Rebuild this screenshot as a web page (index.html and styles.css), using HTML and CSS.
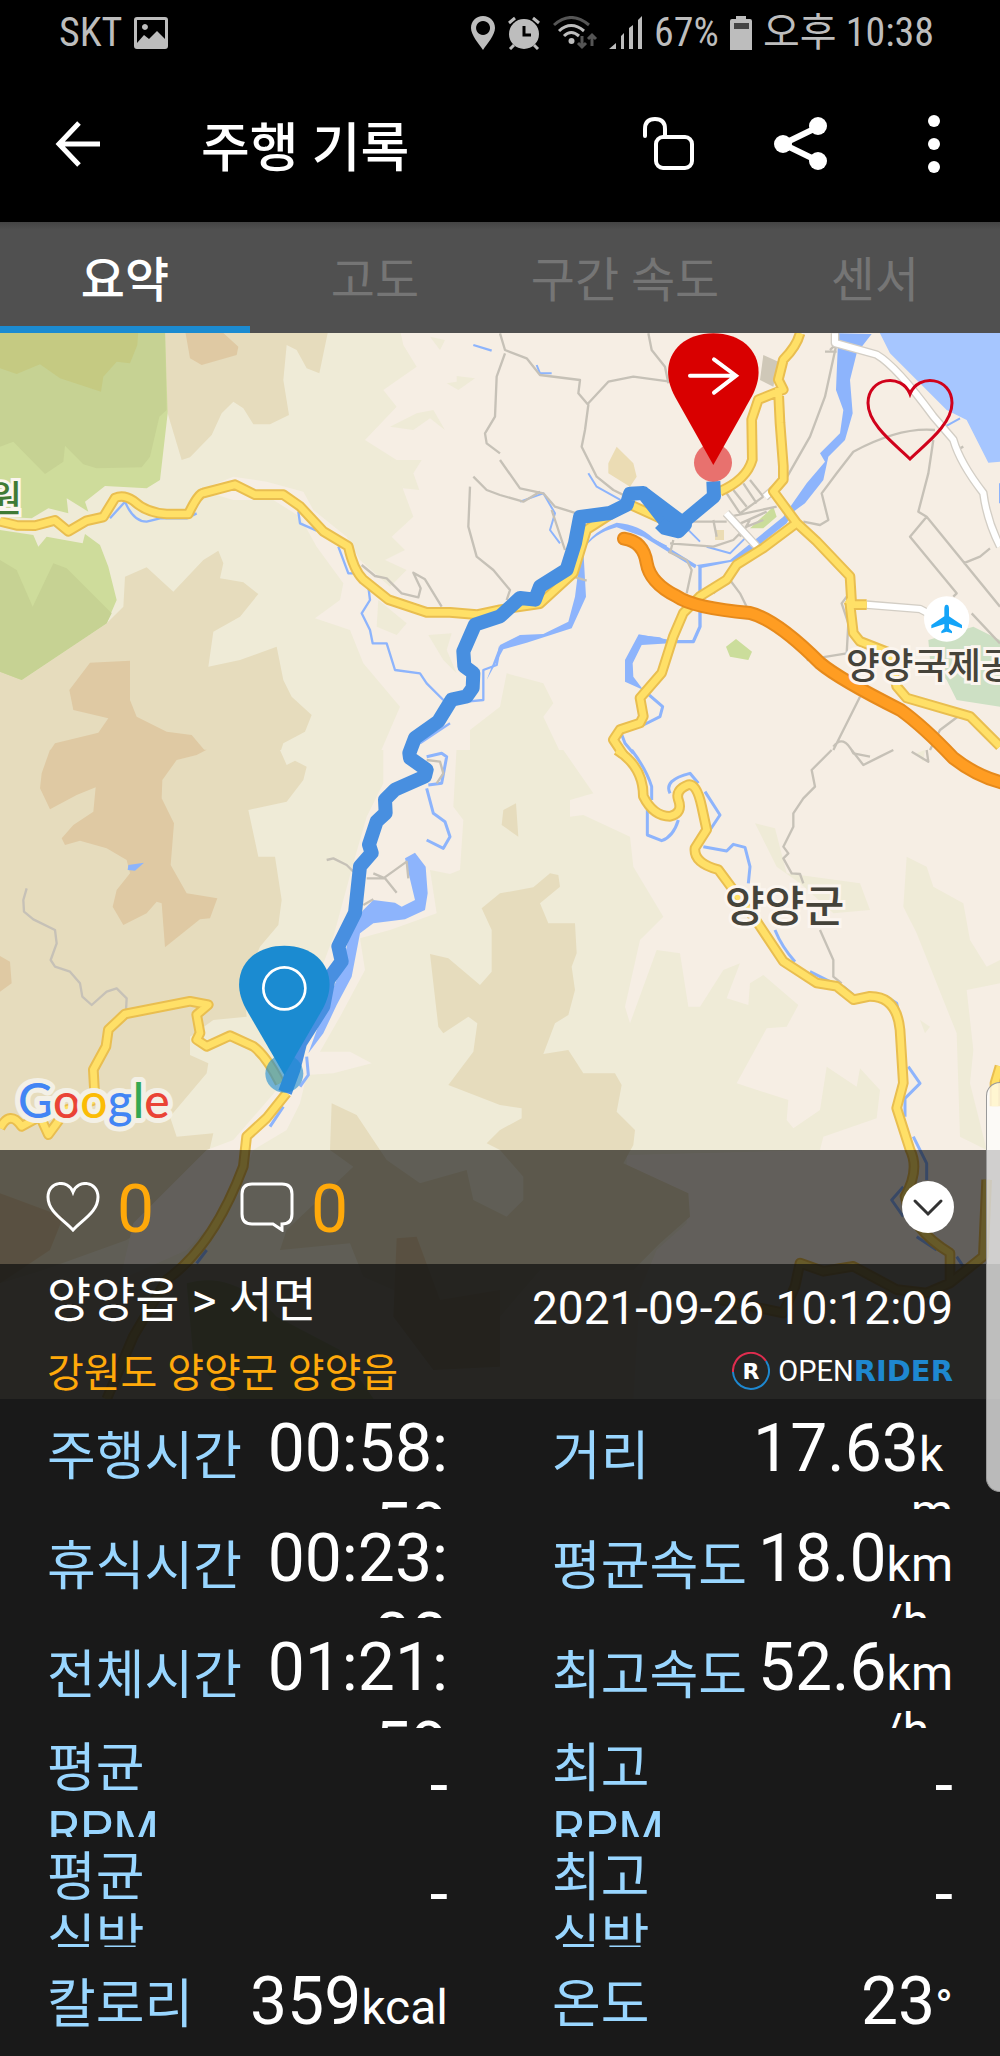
FILE: index.html
```
<!DOCTYPE html>
<html lang="ko">
<head>
  <meta charset="UTF-8" />
  <meta name="viewport" content="width=device-width, initial-scale=1.0"/>
  <title>주행 기록</title>
  <link rel="stylesheet" href="styles.css">
</head>
<body>

  <div class="status-bar">
    <span>SKT</span>
    <svg class="picture-icon" width="34" height="32" viewBox="0 0 34 32"><path fill="currentColor" fill-rule="evenodd" d="M3 0H31Q34 0 34 3V29Q34 32 31 32H3Q0 32 0 29V3Q0 0 3 0ZM3 3V26L10 18L15 22L23 14L31 22V3ZM11 7A3 3 0 1 1 10.900 7Z"/></svg>
    <div class="status-right">
      <svg width="26" height="34" viewBox="0 0 26 34"><path fill="currentColor" fill-rule="evenodd" d="M13 0C20 0 25 5 25 12C25 19 17 28 13 34C9 28 1 19 1 12C1 5 6 0 13 0ZM13 5A7 7 0 1 0 13.100 5Z"/></svg>
      <svg class="alarm-icon" width="34" height="34" viewBox="0 0 34 34"><circle cx="17" cy="18" r="15" fill="currentColor"/><path d="M2 7L8 2M26 2L32 7M7 29L3 33M27 29L31 33" stroke="currentColor" stroke-width="3"/><path d="M17 10V19H24" fill="none" stroke="#000" stroke-width="3"/></svg>
      <svg class="wifi-icon" width="46" height="34" viewBox="0 0 46 34" fill="none" stroke="currentColor" stroke-width="3"><path d="M2 9Q19 -6 37 9" stroke="#555"/><path d="M7 15Q19 4 32 15"/><path d="M12 20Q19 13 27 20"/><circle cx="19.500" cy="25" r="3" fill="currentColor" stroke="none"/><path d="M30 20V31M26 27L30 31L34 27M40 30V19M36 23L40 19L44 23" stroke="#555"/></svg>
      <svg class="signal-icon" width="34" height="34" viewBox="0 0 34 34" fill="currentColor"><path d="M0 33L7 27V33ZM12 33V20L15 17V33ZM20 33V12L24 9V33ZM29 33V4L33 0V33Z"/></svg>
      <span>67%</span>
      <svg width="22" height="34" viewBox="0 0 22 34"><path fill="currentColor" d="M6 0H16V3H20Q22 3 22 5V34H0V5Q0 3 2 3H6Z"/><path fill="#444" d="M4 7H19V13H4Z"/></svg>
      <span>오후 10:38</span>
    </div>
  </div>

  <header class="toolbar">
    <button type="button" aria-label="뒤로">
      <svg width="46" height="46" viewBox="0 0 46 46" fill="none" stroke="#fff" stroke-width="5"><path d="M24 2L4 23L24 44M4 23H45"/></svg>
    </button>
    <h1>주행 기록</h1>
    <div class="toolbar-actions">
      <button type="button" aria-label="공개 설정">
        <svg width="52" height="54" viewBox="0 0 52 54" fill="none" stroke="#fff" stroke-width="4" stroke-linecap="round"><path d="M3 19V12Q3 2 13 2Q23 2 23 12V19"/><rect x="14" y="20" width="36" height="31" rx="7"/></svg>
      </button>
      <button type="button" aria-label="공유">
        <svg width="54" height="54" viewBox="0 0 54 54" fill="#fff"><path d="M44 10L9 27L44 44" fill="none" stroke="#fff" stroke-width="6"/><circle cx="9" cy="27" r="9"/><circle cx="44" cy="9" r="9"/><circle cx="44" cy="44" r="9"/></svg>
      </button>
      <button type="button" aria-label="더보기">
        <svg width="12" height="60" viewBox="0 0 12 60" fill="#fff"><circle cx="6" cy="7" r="6"/><circle cx="6" cy="30" r="6"/><circle cx="6" cy="53" r="6"/></svg>
      </button>
    </div>
  </header>

  <nav class="tabs">
    <a href="#summary" class="active">요약</a>
    <a href="#altitude">고도</a>
    <a href="#speed">구간 속도</a>
    <a href="#sensor">센서</a>
  </nav>

  <section class="map" id="summary">
    <svg class="map-canvas" viewBox="0 0 3000 3198">
      <rect width="3000" height="3198" fill="#f6eee4"/>

      <!-- hills -->
      <g transform="translate(0 -9)">
        <path class="low" d="M0 0H1200L1210 45 1250 110 1150 180 1190 230 1095 330 1190 390 1210 480 1240 560 1175 620 1215 660 1155 690 1220 720 1170 770 1080 690 1040 620 940 540 910 485 800 455 700 440 600 480 700 510 820 510 900 560 950 650 1030 760 1020 810 945 865 1050 900 1090 1000 1200 1130 1140 1270H0Z"/>
        <path class="low" d="M1290 20L1335 30 1320 60ZM1340 160L1370 155 1370 138 1425 145 1375 180ZM1170 290L1250 250 1300 240 1335 300 1290 265 1240 300ZM1170 390L1265 390 1240 430 1258 480 1210 475ZM1135 810L1220 880 1190 915 1130 890ZM1285 915L1355 910 1340 960 1370 1030 1330 990Z"/>
        <path class="mid" d="M495 0H985L958 130 920 115 890 60 860 45 850 150 867 255 810 283 760 283 730 235 700 215 665 250 635 315 570 382 545 390 500 240ZM0 1020L65 1050 320 880 370 830 375 740 440 712 520 785 610 690 655 662 670 700 660 745 730 757 775 792 720 860 640 905 625 1010 720 990 830 950 850 1050 875 1100 935 1155 915 1205 850 1240 840 1270H0Z"/>
        <path class="high" d="M555 0H660L715 50 710 75 605 105 570 85ZM270 998L390 992 390 1110 410 1160 500 1205 575 1215 615 1262H150L165 1240 295 1208 325 1165 220 1140 208 1080Z"/>
        <path class="park" d="M0 0H495L503 250 480 450 440 475 315 468 255 515 265 545 200 505 205 550 145 535 95 565 0 560ZM0 600L100 615 115 650 140 620 248 640 255 612 300 645 325 710 350 810 320 880 65 1050 0 1025Z"/>
        <path class="park-mid" d="M0 0H495L500 240 478 260 450 380 425 412 290 415 250 403 195 347 190 395 135 432 40 335 0 350ZM0 690L50 720 98 830 160 700 200 715 335 850 320 880 65 1050 0 1025Z"/>
        <path class="park-high" d="M0 0H415L412 45 390 100 350 95 310 140 303 185 180 145 120 103 50 132 0 115Z"/>
      </g>
      <g transform="translate(1500 -9)">
        <path class="low" d="M-90 1200L0 1130 20 1030 130 1060 160 1120 130 1160 180 1265H-90Z"/>
        <path fill="#cbdd9b" d="M678 950L708 927 756 965 745 990 690 980ZM750 595L820 530 830 560 790 595Z"/>
        <path fill="#ebdcb4" d="M350 350L400 400 410 440 390 470 325 430 325 400ZM645 600H672V630H645Z"/>
        <path fill="#cfc8b8" d="M790 75L835 95 820 170 780 150Z"/>
        <path fill="#cde0c4" d="M1285 930L1420 890 1500 930V1130L1370 1110 1340 1050 1290 990Z"/>
        <path fill="#a6c6ff" d="M1135 0L1500 0V395L1465 398 1400 270 1340 240 1170 70Z"/>
      </g>
      <g transform="translate(0 1251)">
        <path class="low" d="M0 0H1690L1780 130 1710 150 1710 200 1750 195 1890 260 1900 350 1990 500 1920 570 1875 770 1890 820 1970 600 2040 610 2065 770 2100 770 2170 660 2220 640 2180 745 2245 765 2250 700 2290 675 2395 765 2360 830 2300 835 2210 1000 2365 1050 2360 1110 2380 1135 2460 1080 2480 950 2570 1010 2580 955 2640 1020 2630 1105 2470 1160 2460 1200 1880 1215 1880 1280 2060 1340 2060 1420 1970 1500 1920 1620 1900 1950H0Z"/>
        <path class="low" d="M2720 320L2780 350 2800 410 2890 460 2910 570 2960 650 3000 630V700L2900 720 2920 900 2910 1000 2960 1200 2880 1160 2870 850 2750 550 2710 470ZM2265 220L2325 235 2360 370 2580 400 2610 480 2500 490 2400 400 2330 350ZM2750 10L2775 0 2770 35ZM2760 810L2790 830 2775 850Z"/>
        <path class="mid" d="M0 0H840L860 45 885 32 920 50 910 90 860 155 745 180 775 320 825 320 845 450 835 525 780 590 730 700 740 800 640 810 570 860 570 915 625 940 620 970 510 1100 530 1160 640 1150 610 1280 480 1400 380 1470 130 1560 0 1600Z"/>
        <path class="mid" d="M1290 612L1345 625 1440 705 1475 665 1475 540 1445 475 1500 430 1600 412 1650 370 1675 375 1680 410 1620 460 1645 520 1725 520 1730 610 1715 650 1725 720 1705 795 1665 820 1630 912 1705 900 1750 970 1845 970 1865 1005 1850 1085 1905 1140 1900 1185 1870 1240 2065 1330 2070 1400 1980 1480 1900 1560 1620 1560 1500 1700 1250 1650 1090 1580 1050 1480 840 1500 860 1440 1060 1250 990 1200 995 1060 1070 1095 1160 1230 1260 1300 1400 1260 1420 1350 1520 1400 1570 1350 1570 1280 1500 1200 1460 1180 1500 1140 1565 1105 1565 1075 1500 1065 1345 1005 1420 905 1432 820 1405 800 1330 850 1315 830ZM1510 180L1548 160 1555 260 1505 225Z"/>
        <path class="high" d="M150 -1H620L590 15 530 30 487 90 485 145 522 220 512 345 560 430 652 445 630 505 600 508 495 592 485 460 470 455 440 490 370 525 338 470 350 420 390 370 380 330 320 295 240 272 195 285 185 265 220 225 280 185 287 112 230 135 150 178 120 115 125 70ZM0 618L30 635 35 700 0 725ZM0 1330L190 1400 150 1500 0 1600ZM1190 1465L1250 1460 1320 1650 1500 1620V1850L1300 1860 1180 1700Z"/>
        <path fill="#f6eee4" d="M1150 -10H1370L1360 170 1390 210 1380 360 1350 372 1290 360 1310 490 1170 540 1080 565 1095 660 1020 800 960 905 1050 905 1115 940 1000 970 920 975 900 1060 860 1140 760 1200 700 1350 560 1500 360 1590 400 1420 620 1200 700 1170 830 1020 880 900 940 720 1000 560 1060 340 1100 200 1150 100Z"/>
        <path fill="#c5d793" d="M560 1600Q700 1560 830 1700L1020 1800 1130 1960H700L580 1820Z"/>
      </g>

      <!-- rivers -->
      <g transform="translate(1500 -9)">
        <path class="water-fill" d="M1015 10L1115 12 1070 70 1050 150 1058 250 1035 330 985 380 970 450 915 520 880 545 860 580 720 690 600 715 590 705 690 690 850 560 920 460 975 395 960 370 1020 310 1030 240 1008 180Z"/>
        <path class="water-fill" d="M240 680Q260 610 350 578Q420 585 460 625L590 705 585 715 430 620 350 592Q280 610 250 660L258 800 215 895 80 938 10 958 -40 1050 0 945 60 915 130 912 205 875 225 800Z"/>
        <path class="water" d="M600 710V890L580 935H530M510 935L415 918" stroke-width="10"/>
        <path class="water-fill" d="M415 915L480 922 510 940 425 945 398 1000 400 1040 430 1080 375 1055 375 990Z"/>
        <path class="water" d="M430 1080L488 1130 480 1160 430 1185M360 1200L375 1240 400 1270" stroke-width="9"/>
        <path class="water" d="M110 105L120 130H155M265 430L290 470 380 520M60 515L130 490 165 550 150 600 180 640M500 650L440 620M555 590L600 635M620 650L690 670 740 620M1500 460V520M1335 290L1380 265" stroke-width="6"/>
      </g>
      <g transform="translate(0 -9)">
        <path class="water" d="M375 515L330 565M375 515Q400 575 440 575L480 565H560L590 550M895 545L900 580 950 602M1015 650L1045 730H1065M1105 770L1110 810 1085 850 1110 900 1118 940 1160 940 1185 1020 1260 1030 1280 1060 1330 1110M1500 950L1490 1005 1450 1020V1110L1400 1115M1350 1180L1260 1240M1420 45L1475 62" stroke-width="7"/>
      </g>
      <g transform="translate(0 1251)">
        <path class="water-fill" d="M385 345L432 338 405 362 383 360ZM1215 325L1245 308 1277 350 1283 430 1275 480 1215 508 1120 520 1080 550 1055 680 1010 765 970 850 925 910 965 800 1030 640 1050 540 1090 480 1120 450 1185 458 1205 470 1245 450Z"/>
        <path class="water" d="M1280 115L1300 190 1335 215 1350 260 1330 295 1280 270M1280 20L1325 10 1340 20 1325 100 1285 105M920 920L925 975 900 1010M850 1070L810 1130M620 1500L590 1540M1895 0Q1940 60 1955 110V150M1942 180V255L1985 272Q2020 260 2035 210M2010 130Q1990 90 2070 70L2095 100M2115 125L2160 195 2130 240M2110 290L2180 303 2200 283 2235 292 2250 350 2245 400M2325 540Q2345 590 2385 635M2430 665L2490 695M2530 710L2560 735M2660 740L2690 760 2710 850M2725 950L2760 1000 2715 1045V1100M2740 1160L2780 1240V1290M2710 1310L2675 1350 2710 1400M2750 1460L2810 1500M2870 1520L2890 1550" stroke-width="9"/>
      </g>

      <!-- minor roads -->
      <g class="lane" transform="translate(1500 -9)">
        <path d="M0 10L15 60 80 85 120 135 240 150 235 190 265 225 255 300 245 350 290 440 340 480 380 500M15 70L-10 140 -15 260 -45 310 -40 340 0 370M265 220L325 155 400 140 510 155M445 10L455 60 495 110 505 160M0 390L60 475 130 490 165 530 230 550M0 495L70 515 120 485M155 540L195 660M-80 440L-40 480 0 495M-90 470L-95 590 -70 680 -20 720 30 780 20 810M510 640L640 650 700 630 740 590M505 665L560 690 575 720 560 790M520 630L510 670M220 740L260 752M690 750L720 790 740 830M640 790L655 775M990 60L1010 40 975 200 930 320 850 460M975 65H1010M1305 300Q1200 290 1060 365L1010 430 965 490 985 570 960 585 910 575M1300 330L1285 430 1255 545 1280 560 1500 830M1280 560L1230 620 1370 790 1360 800M1470 655L1440 680 1390 700M1370 360L1390 350M1040 800L1025 820 1045 880 1040 970 980 980 920 990M1415 850L1500 940M1080 1100L1050 1160 1000 1260M1380 1155L1320 1200 1290 1260M1000 1250Q1030 1210 1060 1270L1110 1280M580 575H680M640 570L650 620M680 490L720 550 790 500M700 480L740 530M730 460L770 520M750 450L790 500M690 560L830 530M700 590L800 545M720 620L750 570M740 590L790 570"/>
      </g>
      <g class="lane" transform="translate(0 -9)">
        <path d="M1085 705L1125 738 1160 745 1205 790 1255 802 1262 775 1240 728 1275 748 1325 830"/>
      </g>
      <g class="lane" transform="translate(0 1251)">
        <path d="M80 415L70 450 72 485 100 508 165 540 170 580 152 630 165 650 210 665 240 700 247 740 275 765 320 725 350 715 380 745 378 780M980 330L1000 325 1040 345 1060 365M1100 385L1150 385 1220 335 1225 385M1120 370L1155 385 1190 428M1280 30L1320 35 1330 70 1310 100M1090 465L1120 448M2495 0L2435 60 2445 110 2410 145 2380 190V230L2350 290 2365 310 2350 325 2375 370 2400 372 2410 400M2460 540L2500 630 2500 680 2525 700M2555 0L2590 45 2640 20 2680 0M2735 5L2785 35 2780 0M2740 1310Q2770 1300 2780 1340"/>
      </g>

      <!-- highways -->
      <path class="white-case" d="M2505 1V30L2630 65Q2690 100 2800 250L2860 320Q2880 390 2950 480Q2960 560 3000 640M2600 815L2760 828 2840 870M2178 540L2270 640M2295 492L2320 470"/>
      <path class="white-road" d="M2505 1V30L2630 65Q2690 100 2800 250L2860 320Q2880 390 2950 480Q2960 560 3000 640M2600 815L2760 828 2840 870M2178 540L2270 640M2295 492L2320 470"/>
      <defs>
        <g id="yellow-roads">
          <path d="M0 565L50 577 105 578 165 562 205 595 260 563 310 552 345 495Q370 483 400 503Q440 540 500 543H565Q595 480 610 480L705 455 765 485 850 485 900 520 970 595 1045 640Q1060 710 1090 740L1165 800 1280 838H1350L1430 845 1500 830 1620 812 1720 720 1760 590 1830 545 1880 510 1990 560M2400 1Q2390 40 2350 80L2335 140 2350 170 2275 200 2255 260 2257 380Q2240 440 2160 475M2335 165L2340 270 2350 400V440L2320 475 2390 570 2450 625 2550 730 2555 810 2540 800M2390 570L2290 645 2210 695 2180 740 2100 790 2050 840 2020 910 1985 1020 1920 1095 1930 1150 1920 1170 1860 1190 1840 1220 1870 1265M2600 815H2550L2560 900 2580 925 2670 960 2690 1060 2720 1095 2910 1150 2960 1200 3000 1240"/>
          <path d="M1850 1251Q1930 1300 1930 1390Q1960 1450 2010 1450Q2050 1440 2035 1400Q2025 1370 2065 1355Q2090 1350 2105 1420L2120 1490 2085 1545Q2080 1590 2155 1610L2270 1765 2350 1885 2450 1950 2510 1960 2560 2000 2610 1990Q2690 1990 2700 2090L2710 2250 2690 2325 2730 2450Q2760 2510 2715 2590Q2735 2690 2850 2760V2850L2780 2880 2690 2870 2560 2800 2470 2815 2400 2790 2385 2860 2350 2940 2160 2900M2850 2850L2950 2770 2960 2540M3000 2200L2985 2250V2320"/>
          <path d="M0 2385Q30 2330 65 2380L120 2350 145 2405 200 2330 285 2300 280 2210 318 2140 325 2090 375 2043 570 2005 625 2015 590 2045 600 2100 590 2120 620 2140 690 2108 760 2140Q800 2170 840 2250M860 2280L800 2355 740 2410 730 2500Q640 2740 500 2840L400 3010 320 3198"/>
        </g>
      </defs>
      <use href="#yellow-roads" class="yellow-case"/>
      <use href="#yellow-roads" class="yellow-road"/>
      <path class="orange-case" d="M1872 617Q1930 625 1940 690Q1950 750 2030 790Q2080 825 2250 840Q2330 860 2460 990Q2520 1040 2700 1130Q2770 1180 2860 1275Q2930 1330 3010 1350"/>
      <path class="orange-road" d="M1872 617Q1930 625 1940 690Q1950 750 2030 790Q2080 825 2250 840Q2330 860 2460 990Q2520 1040 2700 1130Q2770 1180 2860 1275Q2930 1330 3010 1350"/>

      <!-- ridden track -->
      <path class="track" d="M2140 445L2142 490 2040 575 2000 570 1930 480 1890 482 1880 515 1830 540 1740 552 1725 630 1700 710 1620 760 1605 800 1560 795 1500 850 1425 875 1390 955 1393 1000 1420 1020 1418 1065 1400 1090 1355 1100 1315 1165 1245 1215 1228 1260 1230 1275 1280 1310 1275 1330 1185 1370 1155 1400 1157 1440 1130 1465 1107 1535 1115 1560 1080 1600 1065 1740 1015 1840 1025 1885 985 1940 970 2020 900 2130 880 2210 855 2278"/>
      <path class="track" d="M1980 570L1995 585 2035 595 2055 575 1935 485"/>

      <!-- finish and start pins -->
      <g transform="translate(2140 1)">
        <circle cx="-1" cy="388" r="57" fill="#e23c3c" fill-opacity=".7"/>
        <path fill="#d90000" d="M0 395L-115 190C-170 90-110 0 0 0S170 90 115 190Z"/>
        <path d="M-70 127H65M2 78L68 127 2 178" fill="none" stroke="#fff" stroke-width="12" stroke-linecap="round"/>
      </g>
      <g transform="translate(853 1838)">
        <circle cy="384" r="57" fill="#1b8bd1" fill-opacity=".6"/>
        <path fill="#1b8bd1" d="M0 388L-115 190C-170 90-110 0 0 0S170 90 115 190Z"/>
        <circle cy="128" r="63" fill="none" stroke="#fff" stroke-width="8"/>
      </g>

      <g transform="translate(2840 858)">
        <circle r="68" fill="#fff"/>
        <path fill="#14a4f8" d="M0-43Q7-43 7-30V-8L46 18V28L7 15V28L16 37V43L0 38-16 43V37L-7 28V15L-46 28V18L-7-8V-30Q-7-43 0-43Z"/>
      </g>

      <text class="park-label" x="-35" y="538">원</text>
      <text class="place" x="2538" y="1038">양양국제공</text>
      <text class="place town" x="2174" y="1768">양양군</text>
      <text class="google" x="54" y="2354"><tspan fill="#4285f4">G</tspan><tspan fill="#ea4335">o</tspan><tspan fill="#fbbc05">o</tspan><tspan fill="#4285f4">g</tspan><tspan fill="#34a853">l</tspan><tspan fill="#ea4335">e</tspan></text>
    </svg>

    <button type="button" class="favorite" aria-label="좋아요">
      <svg width="88" height="82" viewBox="0 0 88 82" fill="none" stroke="#d0021b" stroke-width="3"><path d="M44 80C30 66 2 46 2 24C2 -2 36 -6 44 15C52 -6 86 -2 86 24C86 46 58 66 44 80Z"/></svg>
    </button>

    <div class="overlay">
      <div class="social">
        <button type="button" aria-label="좋아요 수">
          <svg width="54" height="50" viewBox="0 0 54 50" fill="none" stroke="#fff" stroke-width="3"><path d="M27 48C18 38 2 30 2 15C2 -1 22 -3 27 10C32 -3 52 -1 52 15C52 30 36 38 27 48Z"/></svg>
          <span>0</span>
        </button>
        <button type="button" aria-label="댓글 수">
          <svg width="54" height="50" viewBox="0 0 54 50" fill="none" stroke="#fff" stroke-width="3"><path d="M12 2H42Q52 2 52 12V32Q52 42 42 42V48L33 42H12Q2 42 2 32V12Q2 2 12 2Z"/></svg>
          <span>0</span>
        </button>
        <button type="button" class="collapse" aria-label="접기">
          <svg width="52" height="52" viewBox="0 0 52 52"><circle cx="26" cy="26" r="26" fill="#fff"/><path d="M13 20L26 33L39 20" fill="none" stroke="#333" stroke-width="3" stroke-linecap="round"/></svg>
        </button>
      </div>
      <div class="ride-info">
        <div>
          <h2>양양읍 &gt; 서면</h2>
          <p class="region">강원도 양양군 양양읍</p>
        </div>
        <div class="ride-meta">
          <time datetime="2021-09-26T10:12:09">2021-09-26 10:12:09</time>
          <div class="brand">
            <svg width="38" height="38" viewBox="0 0 38 38" fill="none" stroke-width="2"><path d="M1 20A18 18 0 0 1 34 9" stroke="#e02d4f"/><path d="M34 9A18 18 0 1 1 1 20" stroke="#1e88d0"/><text class="brand-mark" x="19" y="27" text-anchor="middle">R</text></svg>
            <span>OPEN<b>RIDER</b></span>
          </div>
        </div>
      </div>
    </div>
  </section>

  <dl class="stats">
    <div class="stat"><dt>주행시간</dt><dd class="wrap">00:58:<br>59</dd></div>
    <div class="stat"><dt>거리</dt><dd class="wrap">17.63<small>k&thinsp;</small><small class="rest">m</small></dd></div>
    <div class="stat"><dt>휴식시간</dt><dd class="wrap">00:23:<br>00</dd></div>
    <div class="stat"><dt>평균속도</dt><dd class="wrap">18.0<small>km</small><small class="rest">/h&nbsp;&nbsp;</small></dd></div>
    <div class="stat"><dt>전체시간</dt><dd class="wrap">01:21:<br>59</dd></div>
    <div class="stat"><dt>최고속도</dt><dd class="wrap">52.6<small>km</small><small class="rest">/h&nbsp;&nbsp;</small></dd></div>
    <div class="stat"><dt class="wrap">평균<br>RPM</dt><dd>-</dd></div>
    <div class="stat"><dt class="wrap">최고<br>RPM</dt><dd>-</dd></div>
    <div class="stat"><dt class="wrap">평균<br>심박</dt><dd>-</dd></div>
    <div class="stat"><dt class="wrap">최고<br>심박</dt><dd>-</dd></div>
    <div class="stat"><dt>칼로리</dt><dd>359<small>kcal</small></dd></div>
    <div class="stat"><dt>온도</dt><dd>23<small>°</small></dd></div>
  </dl>

  <div class="edge-handle"></div>

</body>
</html>
```
FILE: styles.css
```
* {
  box-sizing: border-box;
}
body {
  margin: 0;
  height: 100vh;
  display: flex;
  flex-direction: column;
  position: relative;
  background-color: #191919;
  color: #fff;
  font-family: Roboto, "Noto Sans CJK KR", sans-serif;
}
h1, h2, p, dl, dd {
  margin: 0;
}
button {
  display: flex;
  align-items: center;
  padding: 0;
  border: none;
  background: none;
  color: inherit;
  font: inherit;
}
svg {
  display: block;
  flex: none;
}

/* top bars */
.status-bar {
  display: flex;
  align-items: center;
  height: 66px;
  flex: none;
  padding: 0 66px 0 59px;
  background-color: #000;
  color: #bdbdbd;
  font-family: "Roboto Condensed", Roboto, "Noto Sans CJK KR", sans-serif;
  font-size: 40px;
  line-height: 40px;
}
.picture-icon {
  margin-left: 12px;
}
.status-right {
  display: flex;
  align-items: center;
  gap: 11px;
  margin-left: auto;
}
.toolbar {
  display: flex;
  align-items: center;
  height: 156px;
  flex: none;
  padding: 0 60px 0 55px;
  background-color: #000;
}
.toolbar h1 {
  margin-left: 100px;
  font-size: 53px;
  font-weight: 500;
}
.toolbar-actions {
  display: flex;
  align-items: center;
  gap: 80px;
  margin-left: auto;
}
.toolbar-actions button:last-child {
  margin-left: 20px;
}
.tabs {
  display: flex;
  height: 111px;
  flex: none;
  background: linear-gradient(#444, #505050 8px);
}
.tabs a {
  flex: 1;
  display: flex;
  align-items: center;
  justify-content: center;
  padding-top: 4px;
  border-bottom: 7px solid transparent;
  color: #757575;
  font-size: 48px;
  text-decoration: none;
}
.tabs .active {
  border-color: #1b8bd1;
  color: #fff;
  font-weight: 500;
}

/* map */
.map {
  position: relative;
  flex: none;
}
.map-canvas {
  width: 100%;
  height: auto;
}
.low {
  fill: #efebd7;
}
.mid {
  fill: #e6dcbd;
}
.high {
  fill: #dfc9a3;
}
.park {
  fill: #cedc9b;
}
.park-mid {
  fill: #c6d293;
}
.park-high {
  fill: #c5ca82;
}
.water-fill {
  fill: #8db4fc;
}
.water, .lane, .white-case, .white-road, .yellow-case, .yellow-road, .orange-case, .orange-road, .track {
  fill: none;
  stroke-linejoin: round;
}
.water {
  stroke: #8db4fc;
}
.lane {
  stroke: #c6c1b7;
  stroke-width: 7;
}
.white-case {
  stroke: #d3cec5;
  stroke-width: 26;
}
.white-road {
  stroke: #fff;
  stroke-width: 18;
}
.yellow-case {
  stroke: #e9be50;
  stroke-width: 32;
}
.yellow-road {
  stroke: #ffe067;
  stroke-width: 20;
}
.orange-case {
  stroke: #e68a1c;
  stroke-width: 42;
  stroke-linecap: round;
}
.orange-road {
  stroke: #ff9d22;
  stroke-width: 30;
  stroke-linecap: round;
}
.track {
  stroke: #488fe0;
  stroke-width: 42;
}
.place, .park-label {
  font-family: "Noto Sans CJK KR", sans-serif;
  font-size: 110px;
  font-weight: 500;
  fill: #45433a;
  stroke: #fbf5ef;
  stroke-width: 18;
  paint-order: stroke;
}
.town {
  font-size: 130px;
}
.park-label {
  fill: #3f7a35;
}
.google {
  font-family: Lato, sans-serif;
  font-size: 144px;
  font-weight: 500;
  stroke: #f3f0e6;
  stroke-width: 30;
  stroke-linejoin: round;
  paint-order: stroke;
}
.favorite {
  position: absolute;
  top: 46px;
  right: 46px;
}

/* panel over the bottom of the map */
.overlay {
  position: absolute;
  left: 0;
  right: 0;
  bottom: 0;
}
.social {
  display: flex;
  align-items: center;
  gap: 86px;
  height: 114px;
  padding: 0 46px;
  background-color: rgba(0, 0, 0, 0.6);
}
.social button {
  gap: 17px;
  color: #ffa90a;
  font-size: 66px;
}
.social span {
  padding-top: 4px;
}
.social .collapse {
  margin-left: auto;
}
.ride-info {
  display: flex;
  justify-content: space-between;
  height: 135px;
  padding: 0 47px;
  background-color: rgba(15, 15, 14, 0.9);
}
.ride-info h2 {
  font-size: 48px;
  font-weight: 400;
  line-height: 74px;
}
.region {
  color: #ffa90a;
  font-size: 40px;
  line-height: 72px;
}
.ride-meta {
  display: flex;
  flex-direction: column;
  align-items: flex-end;
}
.ride-meta time {
  font-size: 46px;
  line-height: 88px;
}
.brand {
  display: flex;
  align-items: center;
  gap: 8px;
  font-size: 29px;
  line-height: 32px;
}
.brand b {
  color: #1e88d0;
  font-family: "DejaVu Sans", sans-serif;
}
.brand-mark {
  fill: #fff;
  font-family: "DejaVu Sans", sans-serif;
  font-size: 22px;
  font-weight: 700;
}

/* numbers */
.stats {
  flex: 1;
  min-height: 600px;
  display: grid;
  grid-template-columns: 1fr 1fr;
  grid-template-rows: repeat(6, minmax(0, 1fr));
  column-gap: 104px;
  padding: 0 47px;
}
.stat {
  display: flex;
  align-items: center;
  justify-content: space-between;
  overflow: hidden;
}
.stat dt {
  padding-top: 7px;
  color: #99d6ff;
  font-size: 53px;
  line-height: 62px;
  white-space: nowrap;
}
.stat dt.wrap {
  align-self: flex-start;
  padding-top: 10px;
}
.stat dd {
  padding-top: 6px;
  font-size: 66px;
  line-height: 79px;
  text-align: right;
  white-space: nowrap;
}
.stat dd.wrap {
  align-self: flex-start;
  padding-top: 10px;
}
.stat small {
  font-size: 48px;
}
.stat .rest {
  display: block;
  line-height: 36px;
}

/* edge panel handle of the phone */
.edge-handle {
  position: absolute;
  top: 1082px;
  right: 0;
  width: 14px;
  height: 410px;
  border: 1px solid #999;
  border-right: none;
  border-radius: 14px 0 0 14px;
  background-color: rgba(255, 255, 255, 0.7);
}
```
